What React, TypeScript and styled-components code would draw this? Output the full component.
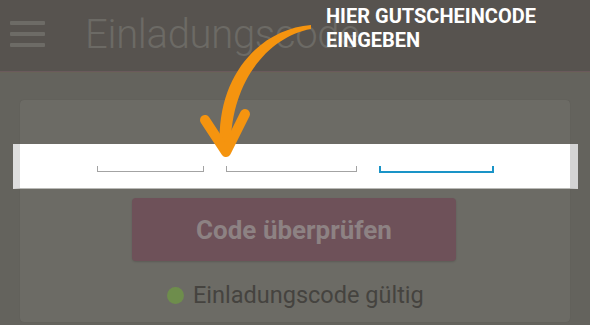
import React, { FC } from 'react'
import styled, { createGlobalStyle } from 'styled-components'

const GlobalStyle = createGlobalStyle`
    html, body {
        margin: 0;
        padding: 0;
        background: #64635d;
        overflow: hidden;
    }
    * { box-sizing: border-box; }
`

const Screen = styled.div`
    position: relative;
    width: 590px;
    height: 325px;
    background: #64635d;
    font-family: Roboto, 'Liberation Sans', sans-serif;
`

const Header = styled.header`
    display: flex;
    align-items: center;
    height: 73px;
    padding: 0 0 4px 10px;
    background: #57534f;
    border-bottom: 1px solid #676358;
    box-shadow: inset 0 -1px 0 #6a5a5c;
`

const MenuIcon = styled.div`
    display: flex;
    flex-direction: column;
    gap: 7px;
    width: 35px;
`

const MenuBar = styled.span`
    display: block;
    height: 4px;
    background: #6d6b66;
    border-radius: 1px;
`

const Title = styled.h1`
    margin: 0 0 0 40px;
    font-weight: 300;
    font-size: 40px;
    color: #6c6a65;
    letter-spacing: -0.3px;
`

const Body = styled.main`
    padding: 27px 20px 0;
`

const Card = styled.section`
    height: 222px;
    padding-top: 44px;
    background: #6c6b65;
    border-radius: 4px;
    box-shadow: 0 0 1px rgba(0, 0, 0, 0.15);
`

const CodeStrip = styled.div`
    display: flex;
    align-items: flex-start;
    gap: 22px;
    height: 45px;
    margin: 0 -8px 0 -7px;
    padding: 22px 0 0 77px;
    background: #ffffff;
    border-left: 7px solid #dedede;
    border-right: 8px solid #d4d4d4;
    border-bottom: 1px solid #b9b9b6;
`

const CodeField = styled.div<{ $width: number; $active?: boolean }>`
    width: ${p => p.$width}px;
    height: ${p => (p.$active ? 7 : 6)}px;
    border: ${p => (p.$active ? '2.5px solid #1a94c7' : '1.5px solid #a3a3a3')};
    border-top: none;
`

const CheckButton = styled.button`
    display: block;
    width: 324px;
    height: 63px;
    margin: 9px auto 0 112px;
    padding: 0;
    border: none;
    border-radius: 4px;
    background: #6e5159;
    color: #8d8283;
    font-family: Roboto, 'Liberation Sans', sans-serif;
    font-weight: 700;
    font-size: 26px;
    box-shadow: 0 1px 2px rgba(0, 0, 0, 0.15);
`

const Status = styled.div`
    display: flex;
    align-items: center;
    gap: 9px;
    margin: 20px 0 0 147px;
    color: #45433f;
    font-size: 23.5px;
`

const Dot = styled.span`
    width: 17px;
    height: 17px;
    border-radius: 50%;
    background: #6e8d4c;
`

const Callout = styled.div`
    position: absolute;
    left: 326px;
    top: 4px;
    color: #ffffff;
    font-weight: 700;
    font-size: 20px;
    line-height: 24px;
`

const Arrow = styled.svg`
    position: absolute;
    left: 0;
    top: 0;
    pointer-events: none;
`

const fields = [
    { id: 'a', width: 107 },
    { id: 'b', width: 131 },
    { id: 'c', width: 115, active: true },
]

const App: FC = () => (
    <>
        <GlobalStyle />
        <Screen>
            <Header>
                <MenuIcon>
                    <MenuBar />
                    <MenuBar />
                    <MenuBar />
                </MenuIcon>
                <Title>Einladungscode</Title>
            </Header>
            <Body>
                <Card>
                    <CodeStrip>
                        {fields.map(f => (
                            <CodeField key={f.id} $width={f.width} $active={f.active} />
                        ))}
                    </CodeStrip>
                    <CheckButton>Code überprüfen</CheckButton>
                    <Status>
                        <Dot />
                        Einladungscode gültig
                    </Status>
                </Card>
            </Body>
            {/* tutorial overlay */}
            <Callout>
                HIER GUTSCHEINCODE
                <br />
                EINGEBEN
            </Callout>
            <Arrow width="590" height="325" viewBox="0 0 590 325">
                <path
                    d="M311 25 C260 29 215 76 220 150 L231 150 C229 86 266 37 311 29 Z"
                    fill="#f5940f"
                />
                <path
                    d="M205 120 L226 152 L245 114"
                    fill="none"
                    stroke="#f5940f"
                    strokeWidth="10"
                    strokeLinecap="round"
                    strokeLinejoin="round"
                />
            </Arrow>
        </Screen>
    </>
)

export default App
